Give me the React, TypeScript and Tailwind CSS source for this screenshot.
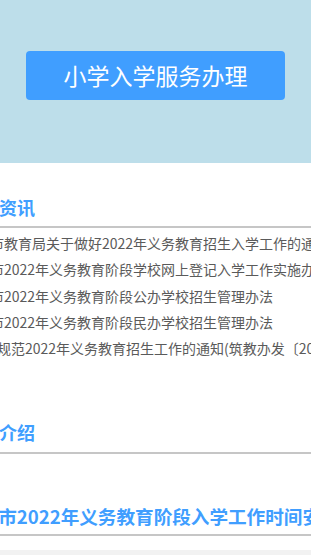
const newsItems = [
  { text: "贵阳市教育局关于做好2022年义务教育招生入学工作的通知", indent: "ml-[-38px]" },
  { text: "贵阳市2022年义务教育阶段学校网上登记入学工作实施办法", indent: "ml-[-38px]" },
  { text: "贵阳市2022年义务教育阶段公办学校招生管理办法", indent: "ml-[-38px]" },
  { text: "贵阳市2022年义务教育阶段民办学校招生管理办法", indent: "ml-[-38px]" },
  { text: "关于规范2022年义务教育招生工作的通知(筑教办发〔2022〕5号)", indent: "ml-[-31px]" },
];

export default function App() {
  return (
    <main
      className="w-full min-h-[555px] overflow-hidden bg-white flex flex-col"
      style={{ fontFamily: '"Noto Sans CJK SC", "Noto Sans", sans-serif' }}
    >
      {/* Banner */}
      <div className="h-[163px] bg-[#bddeea] pt-[51px] px-[26px]">
        <button className="w-full h-[49px] rounded-[4px] bg-[#409eff] text-white text-[23px] leading-none">
          小学入学服务办理
        </button>
      </div>

      {/* News */}
      <div className="pt-[32px] pb-[7px] border-b-2 border-[#c6c6c6]">
        <h2 className="ml-[-37px] whitespace-nowrap text-[18px] leading-[24px] font-bold text-[#409eff]">
          招生资讯
        </h2>
      </div>
      <ul className="mt-[2px] flex flex-col">
        {newsItems.map((item) => (
          <li
            key={item.text}
            className={`${item.indent} whitespace-nowrap text-[14px] leading-[26.3px] text-[#5a5a5a]`}
          >
            {item.text}
          </li>
        ))}
      </ul>

      {/* Intro */}
      <div className="mt-[59px] pb-[8px] border-b-2 border-[#c6c6c6]">
        <h2 className="ml-[-37px] whitespace-nowrap text-[18px] leading-[24px] font-bold text-[#409eff]">
          政策介绍
        </h2>
      </div>
      <div className="pt-[49px] pb-[5px] border-b-2 border-[#c6c6c6]">
        <a className="block ml-[-39px] whitespace-nowrap text-[18.6px] leading-[26px] font-bold text-[#409eff]">
          贵阳市2022年义务教育阶段入学工作时间安排
        </a>
      </div>

      <div className="mt-[14px] flex-1 bg-[#f2f2f2]" />
    </main>
  );
}
